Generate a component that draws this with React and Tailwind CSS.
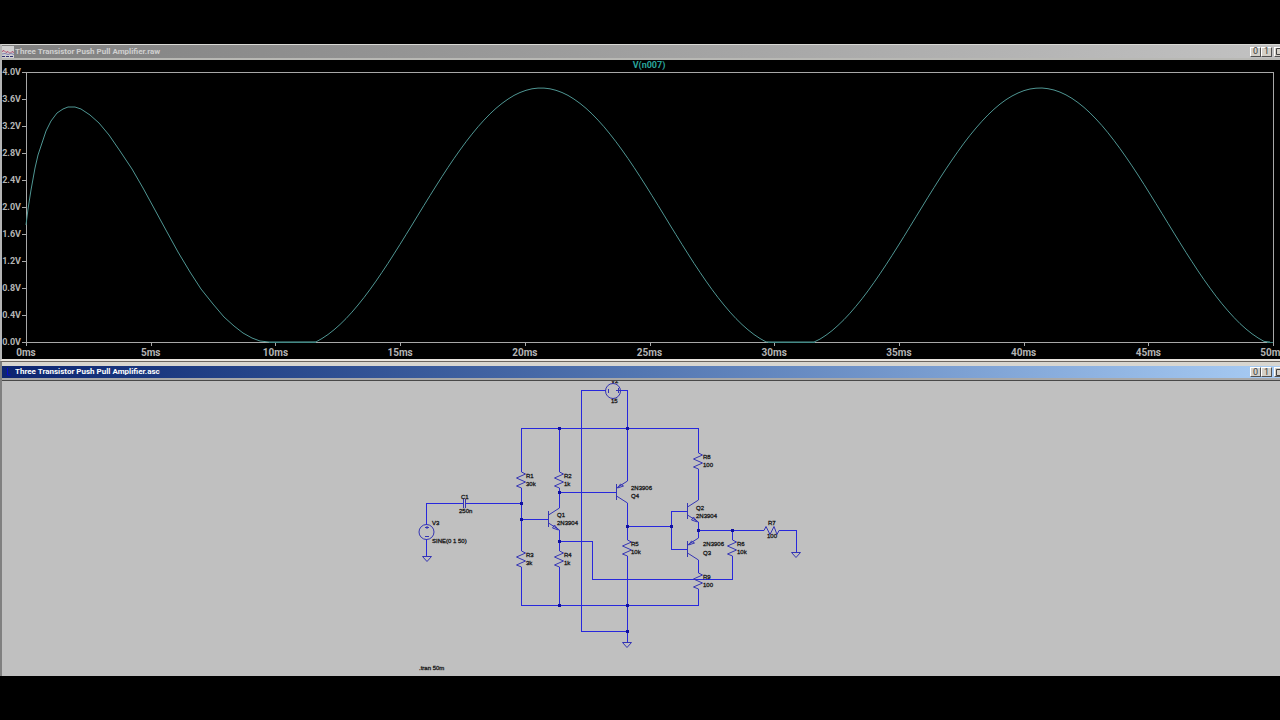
import React from 'react';

const volts = ['4.0V', '3.6V', '3.2V', '2.8V', '2.4V', '2.0V', '1.6V', '1.2V', '0.8V', '0.4V', '0.0V'];
const times = ['0ms', '5ms', '10ms', '15ms', '20ms', '25ms', '30ms', '35ms', '40ms', '45ms', '50ms'];

// capacitor charging up, before the output settles
const startup = [
  [26, 225], [28, 209], [31, 190], [35, 168], [38, 155], [42, 143], [46, 131], [51, 121], [57, 113],
  [63, 109], [68, 107], [75, 107], [81, 109], [90, 115], [99, 123], [109, 135], [120, 151], [132, 169],
  [143, 188], [155, 210], [167, 232], [178, 252], [190, 272], [201, 289], [213, 304], [224, 317],
  [234, 326], [243, 333], [252, 338], [260, 341], [269, 342],
];

const settled = () => {
  const points = [];
  for (let x = 316; x <= 1273; x += 6) {
    const y = 218 - 130 * Math.cos((2 * Math.PI * (x - 541)) / 499);
    points.push([x, Math.min(342, Math.round(y * 10) / 10)]);
  }
  return points;
};

const trace = [...startup, ...settled()].map((p) => p.join(',')).join(' ');

const CaptionButton = ({ label, children }) => (
  <button
    aria-label={label}
    className="flex h-[10px] w-[11px] shrink-0 items-center justify-center border-t border-l border-r border-b border-t-white border-l-white border-r-[#505050] border-b-[#505050] bg-[#d4d0c8] text-[9px] leading-none font-normal text-[#404040]"
  >
    {children}
  </button>
);

const TitleBar = ({ icon, title, className }) => (
  <header className={`flex items-center overflow-hidden font-bold ${className}`}>
    {icon}
    <h2 className="ml-px grow truncate text-[8px] leading-3">{title}</h2>
    <div className="-mr-[5px] flex shrink-0">
      <CaptionButton label="Minimize">0</CaptionButton>
      <CaptionButton label="Maximize">1</CaptionButton>
      <div className="ml-[2px] flex">
        <CaptionButton label="Close">
          <svg className="size-[7px] shrink-0" viewBox="0 0 7 7" fill="none" stroke="#404040">
            <path d="M.5 .5h6v6h-6z" />
          </svg>
        </CaptionButton>
      </div>
    </div>
  </header>
);

const WaveIcon = () => (
  <svg className="size-3 shrink-0" viewBox="0 0 12 12" fill="none">
    <path fill="#d0d0d0" d="M0 0h12v12H0z" />
    <path stroke="#b04868" d="M0 5.5l2-1 2 2 2-1 2 2 2-2 2 1" />
    <path stroke="#8080b0" d="M0 8l3-.5 3 1 3-1 3 1" />
    <path stroke="#303070" d="M0 10.5h3m1 0h3m1 0h3" />
  </svg>
);

const SchematicIcon = () => (
  <svg className="size-3 shrink-0" viewBox="0 0 12 12" fill="none" stroke="#0808d0">
    <path d="M5.500 2v7M5.500 9h3" />
  </svg>
);

const Plot = () => (
  <svg className="block h-auto w-full bg-black" viewBox="2 60 1278 299" fill="none">
    <g stroke="#a8a8a8" shapeRendering="crispEdges">
      <path d="M26.500 72.500H1273.500V342.500H26.500z" />
      {volts.map((v, i) => (
        <path key={v} d={`M22 ${72.5 + i * 27}h4`} />
      ))}
      {times.map((t, i) => (
        <path key={t} d={`M${26.5 + i * 124.7} 342v4`} />
      ))}
    </g>
    <path d="M269 342.500H316M768 342.500H815M1267 342.500H1273" stroke="#3d7f7b" />
    <polyline points={trace} stroke="#4f9693" />
    <g fill="#b4b4b4" fontSize="9" fontWeight="bold">
      {volts.map((v, i) => (
        <text key={v} x="21" y={75 + i * 27} textAnchor="end">{v}</text>
      ))}
      <text x="649" y="68" fill="#2aa39b" textAnchor="middle">V(n007)</text>
    </g>
    <g fill="#b4b4b4" fontSize="10" fontWeight="bold" textAnchor="middle">
      {times.map((t, i) => (
        <text key={t} x={26 + i * 124.7} y="356">{t}</text>
      ))}
    </g>
  </svg>
);

const Resistor = ({ x, y }) => (
  <path d={`M${x} ${y}l4 2l-9 4l9 4l-9 4l5 2`} />
);

// bar on the left, collector on top, emitter at the bottom
const Npn = ({ x, y }) => (
  <g>
    <path d={`M${x} ${y - 8}v16M${x} ${y - 4}l11 -7M${x} ${y + 4}l11 7`} />
    <path d={`M${x + 10} ${y + 11}l-6 -2l2 -3z`} />
  </g>
);

const Pnp = ({ x, y }) => (
  <g>
    <path d={`M${x} ${y - 8}v16M${x} ${y - 4}l11 -7M${x} ${y + 4}l11 7`} />
    <path d={`M${x + 1} ${y - 4}l3 -4l3 2z`} />
  </g>
);

const Ground = ({ x, y }) => <path d={`M${x - 4.5} ${y}h9l-4.500 5z`} />;

const wires = [
  'M426.500 525V503.500H463M466 503.500H521.500',
  'M426.500 539V556',
  'M521.500 472V428.500H698.500V453',
  'M521.500 488V551M521.500 519.500H548',
  'M559.500 428V472M559.500 488V508M559.500 492.500H616',
  'M559.500 530V551M559.500 541.500H592.500V579.500H732.500V556',
  'M521.500 567V605.500H698.500V589',
  'M559.500 567V605',
  'M606 390.500H581.500V631.500H627',
  'M620 390.500H627.500V481',
  'M627.500 503V540M627.500 556V642',
  'M627 526.500H671.500M687 511.500H671.500V549.500H687',
  'M698.500 469V500M698.500 522V538M698.500 560V573',
  'M698 530.500H764M732.500 530V540M780 530.500H796.500V552',
];

const junctions = [
  [521, 503], [521, 519], [559, 428], [559, 492], [559, 541], [559, 605], [627, 428],
  [627, 526], [627, 605], [627, 631], [671, 526], [698, 530], [732, 530],
];

const labels = [
  [461, 499, 'C1'], [459, 513, '250n'], [432, 525, 'V3'], [432, 543, 'SINE(0 1 50)'],
  [526, 478, 'R1'], [526, 486, '30k'], [564, 478, 'R2'], [564, 486, '1k'],
  [526, 557, 'R3'], [526, 565, '3k'], [564, 557, 'R4'], [564, 565, '1k'],
  [557, 517, 'Q1'], [557, 525, '2N3904'], [631, 490, '2N3906'], [631, 498, 'Q4'],
  [631, 546, 'R5'], [631, 554, '10k'], [703, 459, 'R8'], [703, 467, '100'],
  [696, 510, 'Q2'], [696, 518, '2N3904'], [703, 546, '2N3906'], [703, 555, 'Q3'],
  [737, 546, 'R6'], [737, 554, '10k'], [768, 525, 'R7'], [767, 538, '100'],
  [703, 579, 'R9'], [703, 587, '100'], [611, 383, 'V2'], [611, 403, '15'],
  [419, 670, '.tran 50m'],
];

const Schematic = () => (
  <svg className="block h-auto w-full bg-[#c0c0c0]" viewBox="2 381 1278 295" fill="none">
    <g stroke="#2828dc" shapeRendering="crispEdges">
      {wires.map((d) => (
        <path key={d} d={d} />
      ))}
    </g>
    <g stroke="#3434b4">
      <Resistor x={521.5} y={472} />
      <Resistor x={559.5} y={472} />
      <Resistor x={521.5} y={551} />
      <Resistor x={559.5} y={551} />
      <Resistor x={627.5} y={540} />
      <Resistor x={698.5} y={453} />
      <Resistor x={698.5} y={573} />
      <Resistor x={732.5} y={540} />
      <path d="M764 530.500l2 -4l4 8l4 -8l3 8l2 -4h1" />
      <Npn x={548.5} y={519} />
      <Npn x={687.5} y={511} />
      <Pnp x={616.5} y={492} />
      <Pnp x={687.5} y={549} />
      <path d="M463.500 499v9M465.500 499v9" />
      <circle cx="426.500" cy="532" r="7.500" />
      <path d="M425 527.500h4M427 526v3M425 536.500h4" />
      <circle cx="613" cy="391" r="7.500" />
      <path d="M608.500 389v4M616 390.500h4M618.500 388v5" />
      <Ground x={427} y={556.5} />
      <Ground x={627} y={642.5} />
      <Ground x={796} y={552.5} />
    </g>
    <g fill="#1010a0">
      {junctions.map(([x, y]) => (
        <rect key={`${x}-${y}`} x={x - 1} y={y - 1} width="3" height="3" />
      ))}
    </g>
    <g
      className="font-['Liberation_Sans',Arial,sans-serif]"
      fill="#181818"
      stroke="#181818"
      strokeWidth="0.3"
      fontSize="6"
    >
      {labels.map(([x, y, text]) => (
        <text key={`${x}-${y}`} x={x} y={y}>{text}</text>
      ))}
    </g>
  </svg>
);

export default function App() {
  return (
    <main className="min-h-screen overflow-hidden bg-black py-11 font-[Roboto,'Liberation_Sans',sans-serif]">
      <section className="border-t border-b-2 border-l-2 border-t-[#d8d8d4] border-b-[#e8e4de] border-l-[#b4b4b4]">
        <TitleBar
          icon={<WaveIcon />}
          title="Three Transistor Push Pull Amplifier.raw"
          className="h-[15px] border-b-2 border-[#b8b8b4] bg-linear-to-r from-[#808080] to-[#c2c2c2] text-[#d0d0d0]"
        />
        <Plot />
      </section>
      <section className="border-t border-l-2 border-t-[#6c6660] border-l-[#808080] bg-[#d8d6d0] pt-1">
        <TitleBar
          icon={<SchematicIcon />}
          title="Three Transistor Push Pull Amplifier.asc"
          className="h-3 bg-linear-to-r from-[#0c2470] to-[#a8ccf4] text-white"
        />
        <div className="border-t-2 border-[#a8a8a8]">
          <div className="border-t border-[#484848]">
            <Schematic />
          </div>
        </div>
      </section>
    </main>
  );
}
